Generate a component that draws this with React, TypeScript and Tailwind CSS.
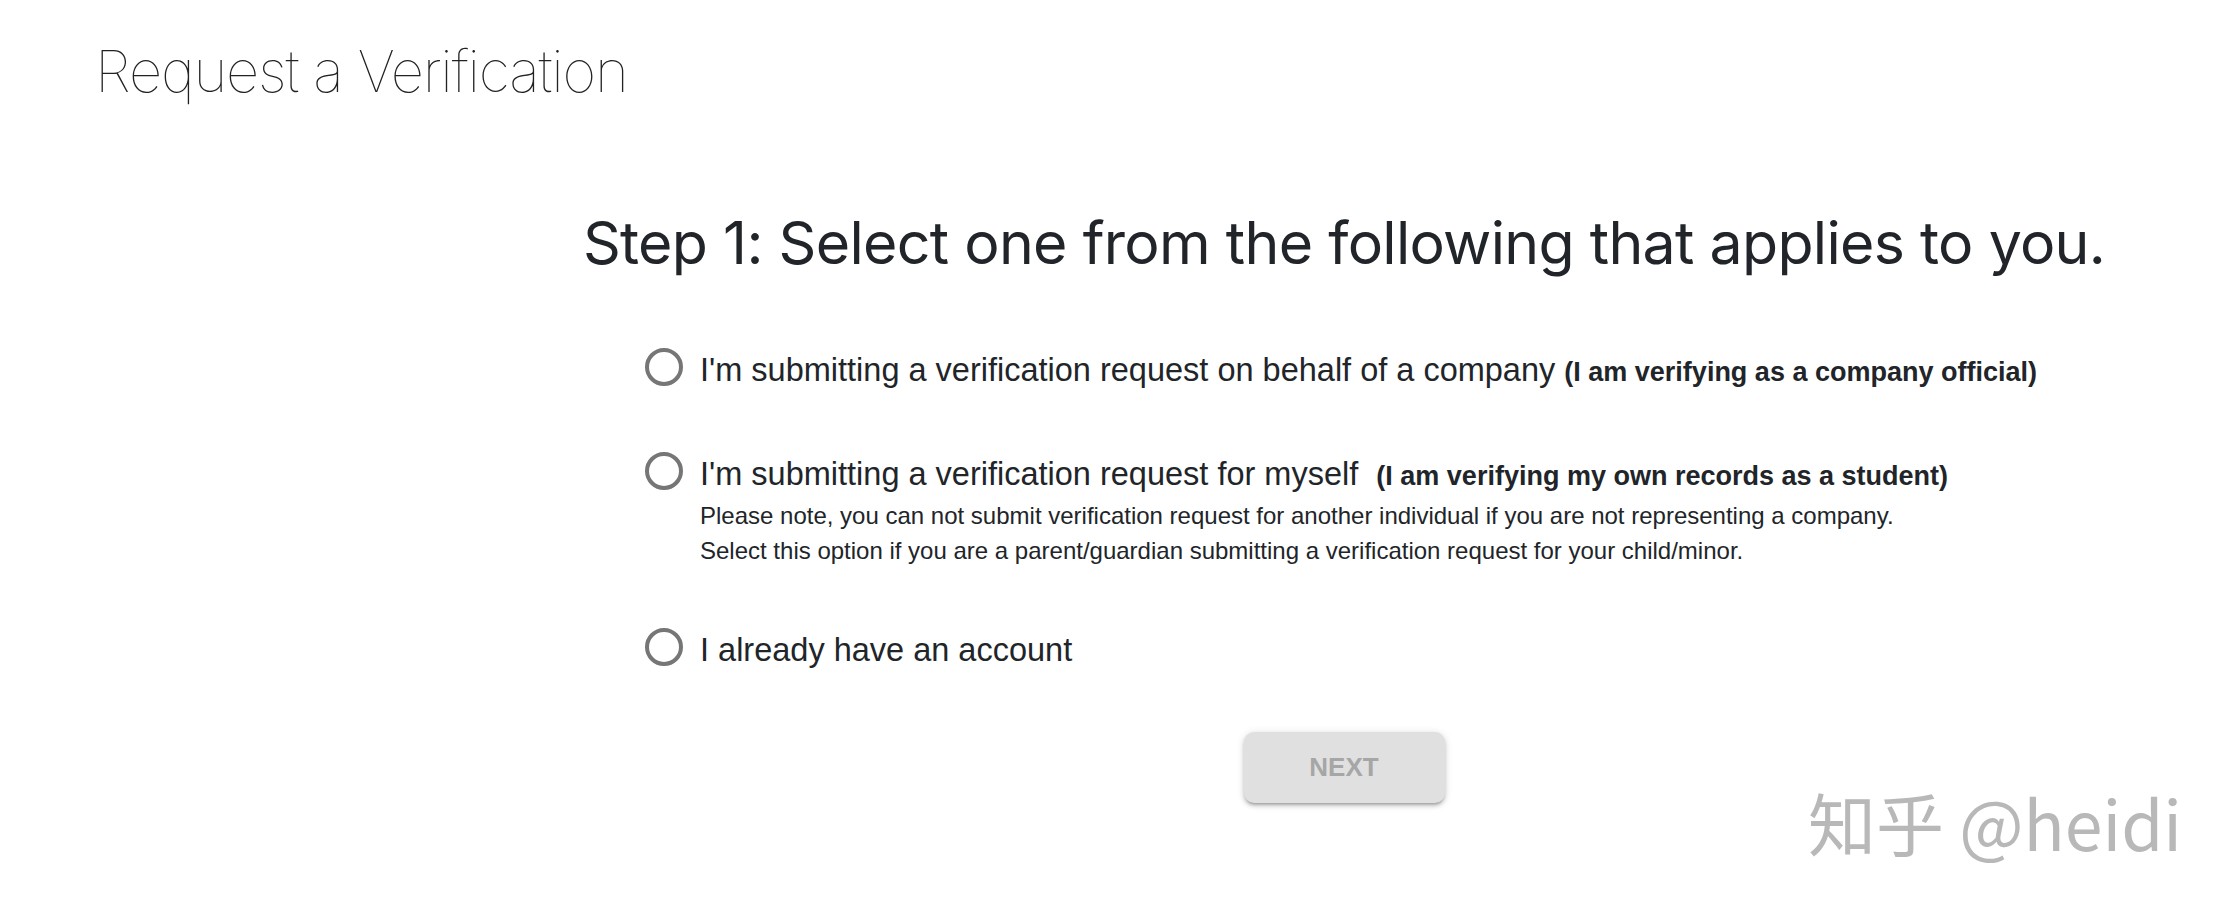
import React from "react";

const Radio = () => (
  <span className="-mt-[2px] block h-[38px] w-[38px] shrink-0 rounded-full border-[4px] border-[#767676] bg-white" />
);

export default function App() {
  return (
    <div className="relative h-[916px] w-[2240px] overflow-hidden bg-white text-[#212529]">
      <header className="pl-[95px] pt-[36px]">
        <h1
          className="text-[58px] leading-[70px] font-thin tracking-[-1.2px] text-[#222]"
          style={{ fontFamily: "Inter, 'Liberation Sans', sans-serif" }}
        >
          Request a Verification
        </h1>
      </header>

      <main className="flex">
        <div className="w-[448px] shrink-0" />
        <div className="flex flex-1 flex-col items-center">
          <h2
            className="mt-[100px] text-center text-[59px] leading-[74px] font-normal tracking-[-0.7px] text-[#212529]"
            style={{ fontFamily: "Inter, 'Liberation Sans', sans-serif" }}
          >
            Step 1: Select one from the following that applies to you.
          </h2>

          <div
            className="mt-[70px] flex w-[1398px] flex-col gap-[62px]"
            style={{ fontFamily: "'Liberation Sans', Arial, sans-serif" }}
          >
            <label className="flex items-start gap-[17px]">
              <Radio />
              <div className="text-[32.5px] leading-[40px]">
                I'm submitting a verification request on behalf of a company{" "}
                <span className="text-[27px] font-bold">(I am verifying as a company official)</span>
              </div>
            </label>

            <label className="flex items-start gap-[17px]">
              <Radio />
              <div>
                <div className="text-[32.5px] leading-[40px]">
                  I'm submitting a verification request for myself&nbsp;{" "}
                  <span className="text-[27px] font-bold">(I am verifying my own records as a student)</span>
                </div>
                <div className="mt-[2px] text-[24px] leading-[35px]">
                  Please note, you can not submit verification request for another individual if you are not representing a company.
                </div>
                <div className="text-[24px] leading-[35px]">
                  Select this option if you are a parent/guardian submitting a verification request for your child/minor.
                </div>
              </div>
            </label>

            <label className="flex items-start gap-[17px]">
              <Radio />
              <div className="text-[32.5px] leading-[40px]">I already have an account</div>
            </label>
          </div>

          <button
            disabled
            className="mt-[62px] h-[71px] w-[201px] rounded-[10px] bg-[#e0e0e0] text-[26px] font-bold text-[#a6a6a6] shadow-[0_3px_3px_-2px_rgba(0,0,0,0.25),0_3px_4px_0_rgba(0,0,0,0.16),0_1px_8px_0_rgba(0,0,0,0.12)]"
            style={{ fontFamily: "'Liberation Sans', Arial, sans-serif" }}
          >
            NEXT
          </button>
        </div>
      </main>

      <div
        className="absolute left-[1808px] top-[780px] text-[68px] leading-[84px] text-[#b8b8b8] [text-shadow:2px_2px_0_#ffffff]"
        style={{ fontFamily: "'Noto Sans CJK SC', 'Liberation Sans', sans-serif" }}
      >
        知乎 @heidi
      </div>
    </div>
  );
}
